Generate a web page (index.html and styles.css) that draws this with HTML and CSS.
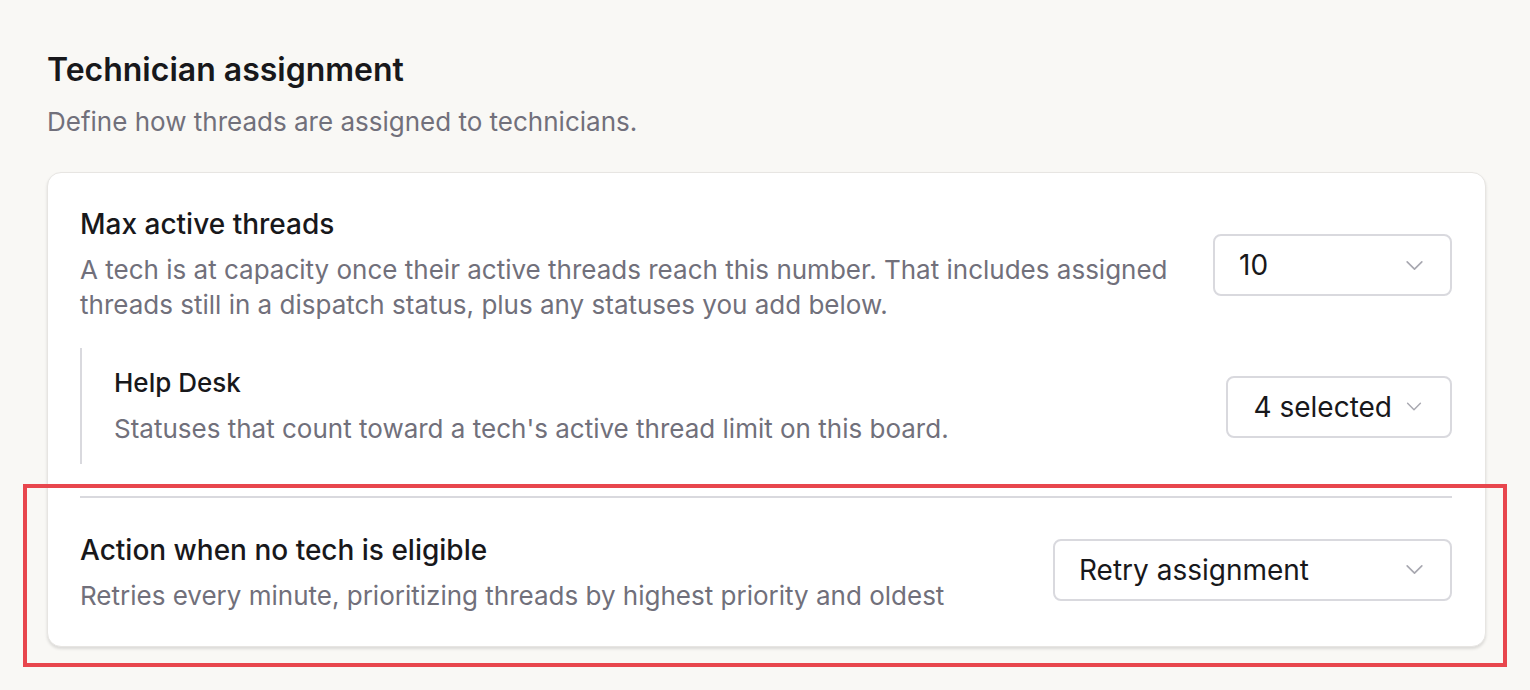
FILE: index.html
```html
<!DOCTYPE html>
<html lang="en">
<head>
    <meta charset="UTF-8">
    <meta name="viewport" content="width=device-width, initial-scale=1.0">
    <title>Technician assignment</title>
    <link rel="stylesheet" href="styles.css">
</head>
<body>
    <div class="page">
        <h1 class="section-title">Technician assignment</h1>
        <p class="section-desc">Define how threads are assigned to technicians.</p>

        <div class="card-wrap">
            <div class="card">
                <div class="setting-row">
                    <div class="setting-text">
                        <div class="setting-label">Max active threads</div>
                        <div class="setting-help">A tech is at capacity once their active threads reach this number. That includes assigned threads still in a dispatch status, plus any statuses you add below.</div>
                    </div>
                    <button type="button" class="select select-sm">
                        <span>10</span>
                        <svg class="chevron" viewBox="0 0 20 12" fill="none"><path d="M2 2l8 8 8-8" /></svg>
                    </button>
                </div>

                <div class="sub-setting">
                    <div class="setting-text">
                        <div class="sub-label">Help Desk</div>
                        <div class="setting-help">Statuses that count toward a tech's active thread limit on this board.</div>
                    </div>
                    <button type="button" class="select select-auto">
                        <span>4 selected</span>
                        <svg class="chevron" viewBox="0 0 20 12" fill="none"><path d="M2 2l8 8 8-8" /></svg>
                    </button>
                </div>

                <hr class="divider">

                <div class="setting-row setting-row-last">
                    <div class="setting-text">
                        <div class="setting-label">Action when no tech is eligible</div>
                        <div class="setting-help">Retries every minute, prioritizing threads by highest priority and oldest</div>
                    </div>
                    <button type="button" class="select select-lg">
                        <span>Retry assignment</span>
                        <svg class="chevron" viewBox="0 0 20 12" fill="none"><path d="M2 2l8 8 8-8" /></svg>
                    </button>
                </div>
            </div>
            <div class="highlight"></div>
        </div>
    </div>
</body>
</html>
```

FILE: styles.css
```css
:root {
    --bg: #f9f8f5;
    --text: #18181b;
    --muted: #71707b;
    --border: #d9d9de;
    --card-border: #e7e5e2;
    --highlight: #e8464d;
}

* {
    margin: 0;
    padding: 0;
    box-sizing: border-box;
}

body {
    font-family: Inter, "Noto Sans", sans-serif;
    background-color: var(--bg);
    color: var(--text);
}

.page {
    padding: 52px 44px 60px 47px;
}

.section-title {
    font-size: 32px;
    line-height: 36px;
    font-weight: 600;
}

.section-desc {
    margin-top: 18px;
    font-size: 26px;
    line-height: 32px;
    color: var(--muted);
}

.card-wrap {
    position: relative;
    margin-top: 34px;
}

.card {
    background-color: white;
    border: 1px solid var(--card-border);
    border-radius: 14px;
    box-shadow: 0 2px 3px rgba(0, 0, 0, 0.12);
    padding: 35px 33px 33px 32px;
}

.setting-row,
.sub-setting {
    display: flex;
    align-items: center;
    justify-content: space-between;
    gap: 40px;
}

.setting-row-last .select {
    margin-bottom: 8px;
}

.setting-label {
    font-size: 28px;
    line-height: 32px;
    font-weight: 500;
}

.sub-label {
    font-size: 26px;
    line-height: 32px;
    font-weight: 500;
}

.setting-help {
    margin-top: 12px;
    font-size: 26px;
    line-height: 35px;
    color: var(--muted);
}

.sub-setting {
    margin-top: 26px;
    border-left: 2px solid var(--border);
    padding: 19px 0 18px 32px;
}

.divider {
    border: none;
    border-top: 2px solid var(--border);
    margin: 32px 0 36px;
}

.select {
    flex-shrink: 0;
    display: flex;
    align-items: center;
    justify-content: space-between;
    height: 62px;
    padding: 0 26px 0 24px;
    background-color: white;
    border: 2px solid var(--border);
    border-radius: 8px;
    font-family: inherit;
    font-size: 28px;
    color: var(--text);
    gap: 15px;
}

.select-sm {
    width: 239px;
}

.select-lg {
    width: 399px;
}

.select-auto {
    padding-left: 25px;
    padding-right: 28px;
    gap: 14px;
}

.select-auto .chevron {
    width: 16px;
}

.chevron {
    width: 19px;
    height: 11px;
    stroke: #a8a8b0;
    stroke-width: 1.8;
    stroke-linecap: round;
    stroke-linejoin: round;
}

.highlight {
    position: absolute;
    left: -24px;
    right: -21px;
    top: 312px;
    height: 183px;
    border: 4px solid var(--highlight);
    pointer-events: none;
}
```
